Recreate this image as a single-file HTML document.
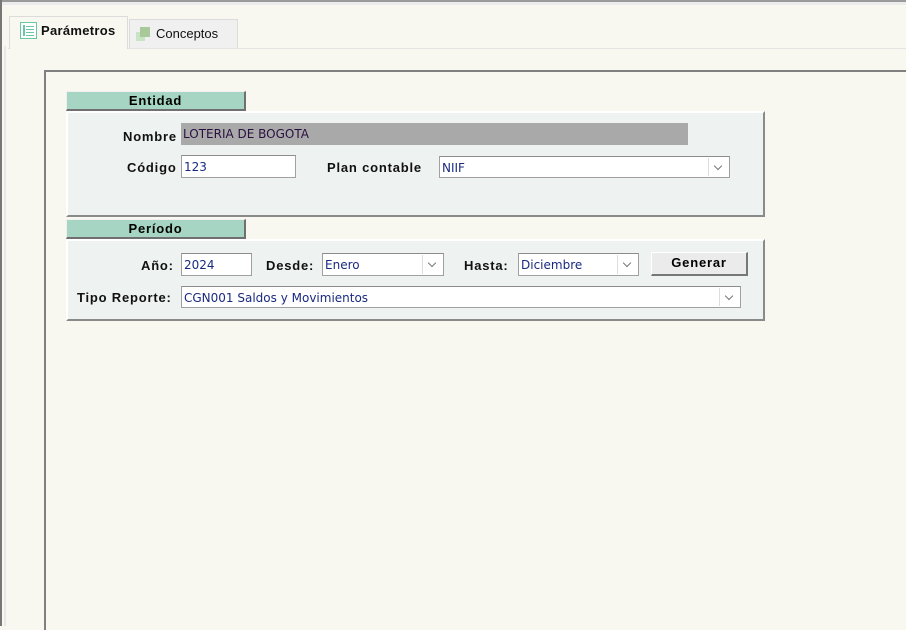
<!DOCTYPE html>
<html><head><meta charset="utf-8"><style>
*{margin:0;padding:0;box-sizing:border-box}
body{width:906px;height:626px;overflow:hidden;background:#f8f8f1;font-family:"Liberation Sans",sans-serif;font-size:13px;position:relative}
.a{position:absolute}
.lbl{position:absolute;font-weight:bold;font-size:13px;color:#111;white-space:nowrap;letter-spacing:0.8px}
.inp{position:absolute;background:#fff;border:1px solid #a0a0a0;border-top-color:#8c8c8c;font-family:"DejaVu Sans",sans-serif;font-size:12px;color:#1a2a80;padding:4px 0 0 2px;white-space:nowrap;overflow:hidden}
.dd{position:absolute;right:1px;top:1px;bottom:1px;width:20px;border-left:1px solid #ddd;background:#fff}
.dd:after{content:"";position:absolute;left:6px;top:5px;width:5px;height:5px;border-right:1px solid #777;border-bottom:1px solid #777;transform:rotate(45deg)}
.hdr{position:absolute;background:#a6d5c3;border-top:1px solid #f0f0f0;border-left:1px solid #f0f0f0;border-right:2px solid #707070;border-bottom:2px solid #707070;font-weight:bold;text-align:center;font-size:13px;line-height:18px;letter-spacing:0.8px}
.pan{position:absolute;background:#eef3f1;border-top:2px solid #fff;border-left:2px solid #fff;border-right:2px solid #8a8a8a;border-bottom:2px solid #8a8a8a}
</style></head><body>
<div class="a" style="left:0;top:0;width:906px;height:2px;background:#9a9a9a"></div>
<div class="a" style="left:0;top:2px;width:906px;height:3px;background:#ececec"></div>
<div class="a" style="left:0;top:0;width:2px;height:626px;background:#777"></div>
<div class="a" style="left:4px;top:46px;width:2px;height:580px;background:#e8e8e8"></div>
<div class="a" style="left:8px;top:48px;width:898px;height:1px;background:#e4e4e4"></div>
<div class="a" style="left:9px;top:16px;width:119px;height:33px;background:#f8f8f1;border:1px solid #dcdcdc;border-bottom:none"></div>
<svg class="a" style="left:20px;top:22px" width="18" height="18"><rect x="0.5" y="0.5" width="16" height="16" fill="#fff" stroke="#6ac7a3"/><rect x="3" y="3" width="2" height="11" fill="#6ac7a3"/><g stroke="#6ac7a3"><line x1="6" y1="4.5" x2="14" y2="4.5"/><line x1="6" y1="7.5" x2="14" y2="7.5"/><line x1="6" y1="10.5" x2="14" y2="10.5"/><line x1="6" y1="13.5" x2="14" y2="13.5"/></g></svg>
<div class="lbl" style="left:41px;top:23px;letter-spacing:0.3px">Parámetros</div>
<div class="a" style="left:129px;top:19px;width:109px;height:29px;background:#f0f0f0;border:1px solid #dcdcdc;border-bottom:none"></div>
<svg class="a" style="left:135px;top:25px" width="18" height="18"><rect x="1" y="7" width="9" height="9" fill="#c9e4c4"/><rect x="5" y="2" width="10" height="10" fill="#a8c99a"/></svg>
<div class="a" style="left:156px;top:26px;font-size:13px;color:#111">Conceptos</div>
<div class="a" style="left:44px;top:70px;width:870px;height:560px;border-top:2px solid #808080;border-left:2px solid #808080;background:#f8f8f1"></div>
<div class="hdr" style="left:66px;top:91px;width:180px;height:20px">Entidad</div>
<div class="pan" style="left:66px;top:111px;width:699px;height:106px"></div>
<div class="lbl" style="left:123px;top:129px">Nombre</div>
<div class="inp" style="left:181px;top:123px;width:507px;height:22px;background:#a9a9a9;border:none;padding-top:4px;color:#2a1040">LOTERIA DE BOGOTA</div>
<div class="lbl" style="left:127px;top:160px">Código</div>
<div class="inp" style="left:181px;top:155px;width:115px;height:23px">123</div>
<div class="lbl" style="left:327px;top:160px">Plan contable</div>
<div class="inp" style="left:439px;top:156px;width:291px;height:22px">NIIF<div class="dd"></div></div>
<div class="hdr" style="left:66px;top:219px;width:180px;height:20px">Período</div>
<div class="pan" style="left:66px;top:239px;width:699px;height:82px"></div>
<div class="lbl" style="left:141px;top:258px">Año:</div>
<div class="inp" style="left:181px;top:253px;width:71px;height:23px">2024</div>
<div class="lbl" style="left:266px;top:258px">Desde:</div>
<div class="inp" style="left:322px;top:253px;width:122px;height:23px">Enero<div class="dd"></div></div>
<div class="lbl" style="left:464px;top:258px">Hasta:</div>
<div class="inp" style="left:518px;top:253px;width:121px;height:23px">Diciembre<div class="dd"></div></div>
<div class="a" style="left:651px;top:252px;width:97px;height:24px;background:#ebebeb;border-top:1px solid #fff;border-left:1px solid #fff;border-right:2px solid #777;border-bottom:2px solid #777;font-weight:bold;text-align:center;line-height:20px;font-size:13px;letter-spacing:0.8px">Generar</div>
<div class="lbl" style="left:77px;top:290px">Tipo Reporte:</div>
<div class="inp" style="left:181px;top:286px;width:560px;height:22px">CGN001 Saldos y Movimientos<div class="dd"></div></div>
</body></html>
